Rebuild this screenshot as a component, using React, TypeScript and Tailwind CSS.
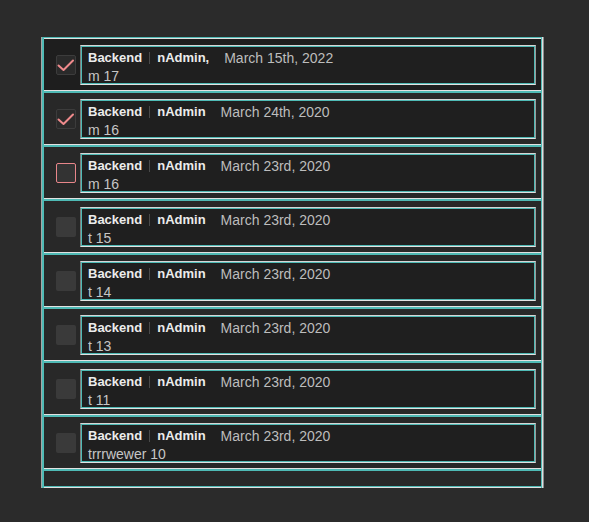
type Item = {
  id: number
  name: string
  date: string
  title: string
  state: 'checked' | 'focus' | 'empty'
}

const items: Item[] = [
  { id: 1, name: 'nAdmin,', date: 'March 15th, 2022', title: 'm 17', state: 'checked' },
  { id: 2, name: 'nAdmin', date: 'March 24th, 2020', title: 'm 16', state: 'checked' },
  { id: 3, name: 'nAdmin', date: 'March 23rd, 2020', title: 'm 16', state: 'focus' },
  { id: 4, name: 'nAdmin', date: 'March 23rd, 2020', title: 't 15', state: 'empty' },
  { id: 5, name: 'nAdmin', date: 'March 23rd, 2020', title: 't 14', state: 'empty' },
  { id: 6, name: 'nAdmin', date: 'March 23rd, 2020', title: 't 13', state: 'empty' },
  { id: 7, name: 'nAdmin', date: 'March 23rd, 2020', title: 't 11', state: 'empty' },
  { id: 8, name: 'nAdmin', date: 'March 23rd, 2020', title: 'trrrwewer 10', state: 'empty' },
]

const Check = ({ state }: { state: Item['state'] }) => {
  if (state === 'checked') {
    return (
      <div className="w-[20px] h-[20px] shrink-0 rounded-[2px] border border-[#3c3c3c] bg-[#2a2a2a] flex items-center justify-center">
        <svg width="18" height="18" viewBox="0 0 18 18" fill="none">
          <path
            d="M1.5 9.5 L6.5 14 L16 4.5"
            stroke="#ef8a8c"
            strokeWidth="2"
            strokeLinecap="round"
            strokeLinejoin="round"
          />
        </svg>
      </div>
    )
  }
  if (state === 'focus') {
    return (
      <div className="w-[20px] h-[20px] shrink-0 rounded-[2px] border border-[#e8868a] bg-[#333333]" />
    )
  }
  return <div className="w-[20px] h-[20px] shrink-0 rounded-[2px] bg-[#3a3a3a]" />
}

const Row = ({ item }: { item: Item }) => (
  <div
    className={`flex items-center gap-[4px] pl-[12px] pr-[5px] pt-[6px] pb-[6px] border-b-2 border-b-[#4fbab5] shadow-[inset_0_-1px_0_#e2e2e2] ${
      item.id === 1 ? 'bg-[#1e1e1e]' : 'bg-[#282828]'
    }`}
  >
    <Check state={item.state} />
    <div className="flex-1 h-[40px] flex flex-col pl-[7px] pt-[3px] bg-[#1f1f1f] border border-t-[#d6d6d6] border-l-[#7e7e7e] border-r-[#9a9a9a] border-b-[#e2e2e2] shadow-[inset_1px_1px_0_#4fbab5,inset_-1px_-1px_0_#4fbab5]">
      <div className="flex items-center h-[18px] text-[13px] leading-[18px]">
        <span className="font-bold text-[#ececec]">Backend</span>
        <span className="mx-[7px] w-px h-[12px] bg-[#4a4a4a]" />
        <span className="font-bold text-[#ececec]">{item.name}</span>
        <span className="ml-[15px] text-[14px] text-[#bdbdbd]">{item.date}</span>
      </div>
      <div className="mt-[1px] text-[14px] leading-[16px] text-[#c6c6c6]">{item.title}</div>
    </div>
  </div>
)

export default function App() {
  return (
    <div
      className="w-[589px] h-[522px] bg-[#2b2b2b] pt-[37px] pl-[41px]"
      style={{ fontFamily: '"Liberation Sans", Arial, sans-serif' }}
    >
      <div className="w-[503px] border-l border-l-[#a6a6a6] border-r border-r-[#8c8c8c]">
        <div className="border-l-2 border-l-[#4fbab5] border-r border-r-[#e0e0e0]">
          <div className="border-r border-r-[#4fbab5] border-t border-t-[#4fbab5]">
            <div className="border-t border-t-[#e2e2e2]">
              {items.map((item) => (
                <Row key={item.id} item={item} />
              ))}
              <div className="h-[17px] bg-[#282828] border-b border-b-[#e2e2e2] shadow-[inset_0_-1px_0_#4fbab5]" />
            </div>
          </div>
        </div>
      </div>
    </div>
  )
}
